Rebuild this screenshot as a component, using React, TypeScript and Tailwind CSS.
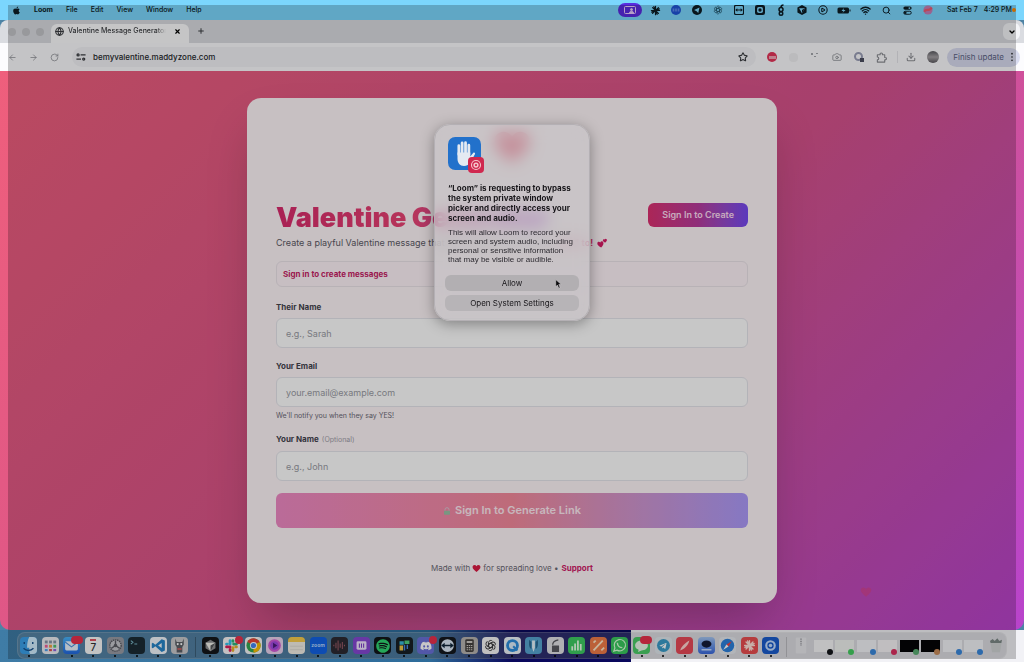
/**
 * File: App.tsx
 * Description: Desktop scene with a browser window, a Valentine form and a
 *              system permission dialog on top of everything.
 */

import type { ReactNode } from "react";
import {
  ArrowLeft,
  ArrowRight,
  Camera,
  ChevronDown,
  CirclePlay,
  Download,
  Globe,
  Plus,
  RotateCw,
  Search,
  Star,
  Wifi,
  X,
} from "lucide-react";
import { FaApple, FaDiscord, FaSpotify, FaTelegramPlane } from "react-icons/fa";

/* ---------- Small drawings ---------- */

function HeartIcon({ className }: { className?: string }) {
  return (
    <svg viewBox="0 0 24 24" className={className} fill="currentColor" aria-hidden="true">
      <path d="M12 21.5C5 16 1.5 12.4 1.5 8.2 1.5 5 4 2.8 6.9 2.8c2 0 4 1.1 5.1 3.1 1.1-2 3.1-3.1 5.1-3.1 2.9 0 5.4 2.2 5.4 5.4 0 4.2-3.5 7.8-10.5 13.3z" />
    </svg>
  );
}

function TwoHeartsIcon() {
  return (
    <svg viewBox="0 0 24 24" className="size-[10px]" fill="#d81c66" aria-hidden="true">
      <path d="M10 23C3.500 19.500 0 16 .8 12c.7-3.200 4.500-4.300 7-1.500C9.500 7.200 14 7.300 15.200 10.500 16.500 14.500 14 18.500 10 23z" />
      <path d="M20 11c-4-1.500-6.200-3.500-6-6 .2-2.300 2.800-3 4.500-1.200C19.500 1.500 22.500 1.300 23.500 3.500 24.400 6 22.500 8.500 20 11z" />
    </svg>
  );
}

function TuneIcon() {
  return (
    <svg viewBox="0 0 24 24" className="size-[10px]" fill="none" stroke="#3a3c40" strokeWidth="3">
      <circle cx="5" cy="7" r="2.500" />
      <path d="M11 7h12M1 17h11" />
      <circle cx="18.500" cy="17" r="2.500" />
    </svg>
  );
}

function ExtensionsIcon() {
  return (
    <svg viewBox="0 0 24 24" className="size-[11px]" fill="none" stroke="#8c8e94" strokeWidth="2.500">
      <path d="M3 6h6c-1-5 6-5 5 0h5v6c5-1 5 6 0 5v5H3v-5c4 0 4-6 0-6z" strokeLinejoin="round" />
    </svg>
  );
}

function Knot({ color }: { color: string }) {
  return (
    <svg viewBox="0 0 24 24" className="size-full" fill="none" stroke={color} strokeWidth="1.7">
      {[0, 60, 120, 180, 240, 300].map((a) => (
        <path key={a} transform={`rotate(${a} 12 12)`} d="M8.500 13.500V6.500a4 4 0 0 1 7.200-2.300M8.500 9.500l6-3.400" />
      ))}
    </svg>
  );
}

function Burst({ color }: { color: string }) {
  return (
    <svg viewBox="0 0 24 24" className="size-full" stroke={color} strokeWidth="2.600" strokeLinecap="round">
      <path d="M12 3v18M3 12h18M5.600 5.600l12.800 12.800M18.400 5.600L5.600 18.400M8.500 3.600l7 16.800M3.600 15.500l16.800-7" />
    </svg>
  );
}

function Shape({ children }: { children: ReactNode }) {
  return (
    <svg viewBox="0 0 24 24" className="size-full" aria-hidden="true">
      {children}
    </svg>
  );
}

/* ---------- Menu bar ---------- */

const STATUS_ICONS: { name: string; art: ReactNode }[] = [
  { name: "Burst", art: <div className="size-[11px]"><Burst color="#0c1c24" /></div> },
  {
    name: "Meetings",
    art: (
      <div className="size-[10px]">
        <Shape>
          <circle cx="12" cy="12" r="12" fill="#1f55d8" />
          <path d="M4 10h16M4 14h16" stroke="#8fb8ff" strokeWidth="2" strokeDasharray="4 2" />
        </Shape>
      </div>
    ),
  },
  {
    name: "Telegram",
    art: (
      <div className="size-[10px]">
        <Shape>
          <circle cx="12" cy="12" r="12" fill="#0c1c24" />
          <path d="M5 12l13-6-3 13-4-4z" fill="#7fd6fc" />
        </Shape>
      </div>
    ),
  },
  { name: "Assistant", art: <div className="size-[10px]"><Knot color="#24566c" /></div> },
  {
    name: "Remote",
    art: (
      <div className="size-[10px]">
        <Shape>
          <rect x="1" y="1" width="22" height="22" rx="4" fill="none" stroke="#0c1c24" strokeWidth="3" />
          <path d="M3 12l5-4v3h8V8l5 4-5 4v-3H8v3z" fill="#0c1c24" />
        </Shape>
      </div>
    ),
  },
  {
    name: "Recorder",
    art: (
      <div className="size-[10px]">
        <Shape>
          <rect width="24" height="24" rx="5" fill="#0c1c24" />
          <rect x="5" y="5" width="14" height="14" rx="4" fill="#7fd6fc" />
          <circle cx="12" cy="12" r="4" fill="#0c1c24" />
        </Shape>
      </div>
    ),
  },
  {
    name: "Sync",
    art: (
      <div className="size-[12px]">
        <Shape>
          <g fill="none" stroke="#0c1c24" strokeWidth="3">
            <circle cx="12" cy="11" r="4" />
            <circle cx="12" cy="19" r="3.500" />
            <path d="M12 7c0-4 2-5 5-5" />
          </g>
        </Shape>
      </div>
    ),
  },
  {
    name: "Cube",
    art: (
      <div className="size-[10px]">
        <Shape>
          <path d="M12 0l11 6v12l-11 6L1 18V6z" fill="#0c1c24" />
          <path d="M5 8h14l-7 12z" fill="#7fd6fc" />
          <path d="M12 12v8l7-12z" fill="#0c1c24" />
        </Shape>
      </div>
    ),
  },
  { name: "Play", art: <CirclePlay className="size-[10px]" strokeWidth={2.5} /> },
  {
    name: "Battery",
    art: (
      <svg viewBox="0 0 28 14" className="h-[7px] w-[14px]" aria-hidden="true">
        <rect x="1" y="1" width="23" height="12" rx="3" fill="#0c1c24" />
        <path d="M26 5v4" stroke="#0c1c24" strokeWidth="2" />
        <path d="M14 2l-5 6h4l-2 4 6-6h-4z" fill="#7fd6fc" />
      </svg>
    ),
  },
  { name: "Wi-Fi", art: <Wifi className="size-[11px]" strokeWidth={3} /> },
  { name: "Search", art: <Search className="size-[9px]" strokeWidth={2.5} /> },
  {
    name: "Control Center",
    art: (
      <div className="size-[9px]">
        <Shape>
          <rect x="1" y="1" width="22" height="9" rx="4.500" fill="#0c1c24" />
          <circle cx="17" cy="5.500" r="2.500" fill="#7fd6fc" />
          <rect x="2" y="14" width="20" height="8" rx="4" fill="none" stroke="#0c1c24" strokeWidth="2.500" />
          <circle cx="6" cy="18" r="3.500" fill="#0c1c24" />
        </Shape>
      </div>
    ),
  },
  {
    name: "Siri",
    art: (
      <div className="size-[10px]">
        <Shape>
          <circle cx="12" cy="12" r="11" fill="#c67fb8" />
          <path d="M3 16C8 6 15 18 21 6" fill="none" stroke="#f05a70" strokeWidth="5" />
        </Shape>
      </div>
    ),
  },
];

function MenuBar() {
  return (
    <header className="flex h-5 items-center justify-between bg-[#7bd6fd] pl-3 pr-2 text-[7px] font-medium text-[#0c1c24]">
      <nav className="flex items-center gap-[13px]">
        <FaApple className="size-[9px]" />
        <button className="font-bold">Loom</button>
        <button>File</button>
        <button>Edit</button>
        <button>View</button>
        <button>Window</button>
        <button>Help</button>
      </nav>
      <div className="flex items-center">
        <button
          aria-label="Screen sharing"
          className="mr-[3px] flex h-[14px] w-6 items-center justify-center rounded-full bg-[#5a2be0]"
        >
          <svg viewBox="0 0 24 16" className="h-2 w-3" fill="none" stroke="#e9ccff" strokeWidth="2">
            <rect x="1" y="1" width="22" height="14" rx="2" />
            <circle cx="15" cy="7" r="2" fill="#e9ccff" />
            <path d="M11 14c0-5 8-5 8 0z" fill="#e9ccff" />
          </svg>
        </button>
        {STATUS_ICONS.map((icon) => (
          <button key={icon.name} aria-label={icon.name} className="flex w-[21px] justify-center">
            {icon.art}
          </button>
        ))}
        <time className="ml-2 flex gap-[6px] whitespace-nowrap">
          <span>Sat Feb 7</span>
          <span>4:29 PM</span>
        </time>
        <span className="size-1 rounded-full bg-orange-400" />
      </div>
    </header>
  );
}

/* ---------- Browser chrome ---------- */

function TabStrip() {
  return (
    <div className="flex h-[23px] items-end bg-[#dadce1] pl-2 pr-1">
      <div className="flex h-[23px] w-[43px] items-center gap-[6px]">
        <span className="size-2 rounded-full bg-[#c3c4c8]" />
        <span className="size-2 rounded-full bg-[#c3c4c8]" />
        <span className="size-2 rounded-full bg-[#c3c4c8]" />
      </div>
      <div className="flex h-[19px] w-[138px] items-center gap-1 rounded-t-md bg-[#fdfdfe] px-1 pb-1">
        <Globe className="size-[9px] shrink-0 text-[#3a3c40]" strokeWidth={3} />
        <span className="flex-1 overflow-hidden whitespace-nowrap text-[7px] font-medium text-[#3a3c40] mask-r-from-90%">
          Valentine Message Generator
        </span>
        <button aria-label="Close tab" className="px-1">
          <X className="size-[7px]" strokeWidth={4} />
        </button>
      </div>
      <button aria-label="New tab" className="mb-2 ml-2">
        <Plus className="size-2 text-[#3a3c40]" strokeWidth={3} />
      </button>
      <button
        aria-label="Search tabs"
        className="mb-[3px] ml-auto flex size-[17px] items-center justify-center rounded-md bg-[#f4f5f8]"
      >
        <ChevronDown className="size-2" strokeWidth={4} />
      </button>
    </div>
  );
}

function Toolbar() {
  return (
    <div className="flex h-7 items-center bg-[#fcfcfe] pl-2 pr-1 text-[#8c8e94]">
      <button aria-label="Back" className="flex w-[21px] justify-start">
        <ArrowLeft className="size-[9px]" strokeWidth={2} />
      </button>
      <button aria-label="Forward" className="flex w-[21px] justify-start">
        <ArrowRight className="size-[9px]" strokeWidth={2} />
      </button>
      <button aria-label="Reload" className="flex w-[22px] justify-start">
        <RotateCw className="size-[9px]" strokeWidth={2} />
      </button>
      <div className="flex h-5 flex-1 items-center gap-[7px] rounded-full bg-[#f2f3f7] px-1">
        <TuneIcon />
        <input
          aria-label="Address"
          defaultValue="bemyvalentine.maddyzone.com"
          className="min-w-0 flex-1 bg-transparent text-[8px] font-medium text-[#26282c] outline-none"
        />
        <button aria-label="Bookmark" className="mr-1">
          <Star className="size-[10px] text-[#3a3c40]" strokeWidth={2.5} />
        </button>
      </div>
      <div className="ml-[11px] flex items-center gap-3">
        <button
          aria-label="Ad blocker"
          className="flex size-[10px] items-center justify-center rounded-full bg-[#e4355a]"
        >
          <span className="h-[3px] w-[7px] bg-[#f4a5b5]" />
        </button>
        <span className="size-[9px] rounded-sm bg-[#f0f0f3]" />
        <svg viewBox="0 0 10 10" className="size-[10px]" fill="#a5a7ac">
          <path d="M1 1h2v2H1zM6 1h2v1H6zM4 4h2v1H4z" />
        </svg>
        <Camera className="size-[10px]" strokeWidth={2} />
        <span className="relative size-[10px]">
          <span className="block size-[9px] rounded-full border-2 border-[#9b9fb8]" />
          <span className="absolute bottom-0 right-0 size-1 bg-[#4c4f60]" />
        </span>
        <ExtensionsIcon />
      </div>
      <span className="ml-[10px] mr-2 h-3 w-px bg-[#e4e5ea]" />
      <button aria-label="Downloads" className="mr-[11px]">
        <Download className="size-[10px]" strokeWidth={2.5} />
      </button>
      <button
        aria-label="Profile"
        className="mr-2 size-3 rounded-full bg-linear-to-b from-[#5a5a60] via-[#a5a2a5] to-[#5c5a60]"
      />
      <button className="flex h-[19px] items-center rounded-full bg-[#d9dcf0] px-[6px] text-[8px] text-[#5c6384]">
        Finish update
        <svg viewBox="0 0 4 12" className="ml-[6px] h-[10px] w-1" fill="#26282c">
          <circle cx="2" cy="2" r="1" />
          <circle cx="2" cy="6" r="1" />
          <circle cx="2" cy="10" r="1" />
        </svg>
      </button>
    </div>
  );
}

/* ---------- Valentine form ---------- */

interface FieldProps {
  id: string;
  label: string;
  placeholder: string;
  optional?: boolean;
  hint?: string;
  type?: string;
}

function Field({ id, label, placeholder, optional, hint, type = "text" }: FieldProps) {
  return (
    <div>
      <label htmlFor={id} className="block text-[8px] leading-3 font-bold text-[#44444e]">
        {label}
        {optional && <span className="ml-[3px] text-[7px] font-normal text-[#a3a0aa]">(Optional)</span>}
      </label>
      <input
        id={id}
        type={type}
        placeholder={placeholder}
        className="mt-[5px] h-[30px] w-full rounded-md border border-[#e6e6ec] bg-white px-[9px] text-[9px] outline-none placeholder:text-[#9a9ca4]"
      />
      {hint && <p className="mt-1 text-[7px] leading-[10px] text-[#6c6a76]">{hint}</p>}
    </div>
  );
}

function ValentineCard() {
  return (
    <section className="w-full max-w-[530px] rounded-[14px] bg-[#fff6f9] px-[29px] pb-[27px] pt-[29px] shadow-2xl">
      <HeartIcon className="mx-auto size-10 text-[#f2516e]" />
      <div className="mt-9 flex items-start justify-between">
        <h1 className="bg-linear-to-r from-[#d92a6c] via-[#ea4474] to-[#a53ae0] bg-clip-text text-[27px] leading-[30px] font-black text-transparent">
          Valentine Generator
        </h1>
        <button className="h-6 rounded-md bg-linear-to-r from-[#dc3070] via-[#b83a9c] to-[#7549f2] px-[14px] text-[9px] font-semibold text-[#ffdcf2]">
          Sign In to Create
        </button>
      </div>
      <p className="flex items-center whitespace-nowrap text-[9px] leading-5 text-[#5c5a66]">
        Create a playful Valentine message that they simply could not say&nbsp;
        <span className="font-semibold text-[#e0246a]">&quot;No&quot; to!</span>
        <span className="ml-1">
          <TwoHeartsIcon />
        </span>
      </p>
      <div className="mt-2 flex h-[26px] items-center rounded-md border border-[#ece4ea] bg-[#fff4f9] px-[6px]">
        <a href="#signin" className="text-[8px] font-bold text-[#c61e66]">
          Sign in to create messages
        </a>
      </div>

      <form className="mt-[14px]" onSubmit={(e) => e.preventDefault()}>
        <div className="flex flex-col gap-3">
          <Field id="their-name" label="Their Name" placeholder="e.g., Sarah" />
          <Field
            id="email"
            type="email"
            label="Your Email"
            placeholder="your.email@example.com"
            hint="We'll notify you when they say YES!"
          />
          <Field id="your-name" label="Your Name" placeholder="e.g., John" optional />
          <button className="flex h-[35px] w-full items-center justify-center gap-1 rounded-md bg-linear-to-r from-[#ef8ac4] via-[#f48a9c] to-[#ac9afa] text-[11px] font-semibold text-[#ffeaf2]">
            <svg viewBox="0 0 24 24" className="size-2" aria-hidden="true">
              <path d="M6 11V8a6 6 0 0 1 12 0v3" fill="none" stroke="#d8c4d0" strokeWidth="3" />
              <rect x="3" y="11" width="18" height="12" rx="2" fill="#9cc0a6" />
            </svg>
            Sign In to Generate Link
          </button>
        </div>
      </form>

      <footer className="mt-8 flex items-center justify-center gap-[2px] text-[8px] leading-4 text-[#6c6a76]">
        Made with
        <HeartIcon className="size-[9px] text-[#dc1c44]" />
        for spreading love •
        <a href="#support" className="ml-px font-bold text-[#cf1c68]">
          Support
        </a>
      </footer>
    </section>
  );
}

/* ---------- Dock ---------- */

interface DockApp {
  name: string;
  tile: string;
  art: ReactNode;
  badge?: string;
  idle?: boolean;
}

const SYSTEM_APPS: DockApp[] = [
  {
    name: "Finder",
    tile: "bg-[#3aa0ea]",
    art: (
      <Shape>
        <path d="M13 0h11v24H14c-1-3-1-6-1-9h-3c0-6 1-11 3-15z" fill="#d2efff" />
        <path d="M6 7v3M18 7v3M5 16c4 4 10 4 14 0" fill="none" stroke="#15518c" strokeWidth="2" />
      </Shape>
    ),
  },
  {
    name: "Launchpad",
    tile: "bg-[#eceef2]",
    idle: true,
    art: (
      <Shape>
        <rect x="4" y="5" width="4" height="4" fill="#8896a8" />
        <rect x="10" y="5" width="4" height="4" fill="#8896a8" />
        <rect x="16" y="5" width="4" height="4" fill="#8896a8" />
        <rect x="4" y="11" width="4" height="4" fill="#f0609a" />
        <rect x="10" y="11" width="4" height="4" fill="#f0a040" />
        <rect x="16" y="11" width="4" height="4" fill="#50c070" />
        <rect x="4" y="17" width="4" height="3" fill="#50a0f0" />
        <rect x="10" y="17" width="4" height="3" fill="#e05050" />
        <rect x="16" y="17" width="4" height="3" fill="#9060e0" />
      </Shape>
    ),
  },
  {
    name: "Mail",
    tile: "bg-linear-to-b from-[#4ab4fa] to-[#2468e0]",
    badge: "w-3",
    art: (
      <Shape>
        <rect x="3" y="6" width="18" height="13" rx="2" fill="#e8f4ff" />
        <path d="M3 7l9 7 9-7" fill="none" stroke="#4a90e0" strokeWidth="1.500" />
      </Shape>
    ),
  },
  {
    name: "Calendar",
    tile: "bg-[#fafafa]",
    art: (
      <div className="flex flex-col items-center leading-none">
        <span className="h-[2px] w-[6px] bg-[#e25260]" />
        <span className="mt-px text-[10px] font-medium text-[#333333]">7</span>
      </div>
    ),
  },
  {
    name: "System Settings",
    tile: "bg-[#9a9ca4]",
    art: (
      <Shape>
        <circle cx="12" cy="12" r="8" fill="#c6c8ce" stroke="#5c5e66" strokeWidth="2" strokeDasharray="2 1" />
        <path d="M12 12V5M12 12l6 4M12 12l-6 4" stroke="#5c5e66" strokeWidth="2" />
        <circle cx="12" cy="12" r="2.500" fill="#5c5e66" />
      </Shape>
    ),
  },
  {
    name: "Terminal",
    tile: "bg-[#1c2b34]",
    art: (
      <Shape>
        <path d="M4 5l3 2.500L4 10M9 10h4" fill="none" stroke="#7ab8c8" strokeWidth="1.500" />
      </Shape>
    ),
  },
  {
    name: "Code",
    tile: "bg-[#f2f7fb]",
    art: (
      <Shape>
        <path d="M16.500 3L21 5v14l-4.500 2-9-8-3.500 3-1.500-1V9L4 8l3.500 3zM16.500 8.500L11.500 12l5 3.500z" fill="#2684c8" fillRule="evenodd" />
      </Shape>
    ),
  },
  {
    name: "Robot",
    tile: "bg-[#c9c9cc]",
    art: (
      <Shape>
        <path d="M6 2l2 5h8l2-5v9l-2 3v8H8v-8l-2-3z" fill="#5b5f66" />
        <circle cx="9.500" cy="10" r="1.500" fill="#ffffff" />
        <circle cx="14.500" cy="10" r="1.500" fill="#ffffff" />
        <path d="M9 17h6" stroke="#e06060" strokeWidth="2" />
      </Shape>
    ),
  },
];

const USER_APPS: DockApp[] = [
  {
    name: "Cursor",
    tile: "bg-[#14161a]",
    art: (
      <Shape>
        <path d="M12 4l7 4v8l-7 4-7-4V8z" fill="#8c8e90" />
        <path d="M5 8h14l-7 12z" fill="#f0f0ea" />
        <path d="M12 12v8l7-12z" fill="#55575a" />
      </Shape>
    ),
  },
  {
    name: "Slack",
    tile: "bg-[#fbf6f8]",
    badge: "w-2",
    art: (
      <Shape>
        <g strokeWidth="4" strokeLinecap="round">
          <path d="M10 5v5M5 10h1" stroke="#36c5f0" />
          <path d="M19 10h-4M14 5v1" stroke="#2eb67d" />
          <path d="M14 19v-4M19 14h-1" stroke="#ecb22e" />
          <path d="M5 14h5M10 19v-1" stroke="#e01e5a" />
        </g>
      </Shape>
    ),
  },
  {
    name: "Chrome",
    tile: "bg-[#f6f6f6]",
    art: (
      <Shape>
        <circle cx="12" cy="12" r="10" fill="#34a853" />
        <path d="M12 12L3.300 7a10 10 0 0 1 17.400 0z" fill="#ea4335" />
        <path d="M12 12l8.700-5A10 10 0 0 1 12 22z" fill="#fbbc05" />
        <circle cx="12" cy="12" r="5" fill="#ffffff" />
        <circle cx="12" cy="12" r="3.700" fill="#4285f4" />
      </Shape>
    ),
  },
  {
    name: "Media",
    tile: "bg-[#e9d2ee]",
    art: (
      <Shape>
        <circle cx="12" cy="12" r="9" fill="#d25ad6" />
        <circle cx="12" cy="12" r="6" fill="#a04ae0" />
        <path d="M10 8l6 4-6 4z" fill="#4a1c78" />
      </Shape>
    ),
  },
  {
    name: "Notes",
    tile: "bg-linear-to-b from-[#f8cc4c] from-30% to-[#f4f0e6] to-30%",
    art: <Shape><path d="M3 13h18M3 18h18" stroke="#d8d4cc" /></Shape>,
  },
  {
    name: "Zoom",
    tile: "bg-[#1262e4]",
    art: <span className="text-[5px] font-bold text-[#b8d8ff]">zoom</span>,
  },
  {
    name: "Audio",
    tile: "bg-[#2c2a32]",
    art: (
      <Shape>
        <path d="M4 11v2M7 8v8M10 5v14M13 9v6M16 7v10M19 11v2" stroke="#9a5a66" strokeWidth="1.500" />
      </Shape>
    ),
  },
  {
    name: "Projects",
    tile: "bg-[#8648d4]",
    art: (
      <Shape>
        <rect x="5" y="6" width="14" height="12" rx="2" fill="#f0e4ff" />
        <path d="M9 9v6M12 9v6M15 9v6" stroke="#7a3ac8" strokeWidth="1.500" />
      </Shape>
    ),
  },
  { name: "Spotify", tile: "bg-[#12161a]", art: <FaSpotify className="size-[14px] text-[#30d872]" /> },
  {
    name: "Editor",
    tile: "bg-[#181f24]",
    art: (
      <Shape>
        <path d="M5 6h6v5H5z" fill="#38b8d8" />
        <path d="M12 5h7v5h-7z" fill="#50d080" />
        <path d="M5 12h5v7H5z" fill="#f0c84a" />
        <path d="M12 11v8M16 11v6" stroke="#4a8ae0" strokeWidth="2" />
      </Shape>
    ),
  },
  { name: "Discord", tile: "bg-[#6a70d8]", badge: "w-2", art: <FaDiscord className="size-3 text-white" /> },
  {
    name: "Remote",
    tile: "bg-[#14181e]",
    art: (
      <Shape>
        <circle cx="12" cy="12" r="9" fill="#dce8f6" />
        <path d="M3 12l5-4v3h8V8l5 4-5 4v-3H8v3z" fill="#10263a" />
      </Shape>
    ),
  },
  {
    name: "Calculator",
    tile: "bg-[#b8b4b0]",
    art: (
      <Shape>
        <rect x="6" y="3" width="12" height="18" rx="2" fill="#44403e" />
        <path d="M8 7h8" stroke="#cfcac4" strokeWidth="3" />
        <path d="M8 12h8M8 15h8M8 18h8" stroke="#cfcac4" strokeWidth="1.500" strokeDasharray="2 1" />
      </Shape>
    ),
  },
  { name: "ChatGPT", tile: "bg-[#f6f6f6]", art: <div className="size-[13px]"><Knot color="#3a3a3c" /></div> },
  {
    name: "QuickTime",
    tile: "bg-[#eef4fa]",
    art: (
      <Shape>
        <circle cx="12" cy="12" r="7" fill="#dceefc" stroke="#2c8cdc" strokeWidth="4" />
        <path d="M13 13l6 6" stroke="#2c8cdc" strokeWidth="3" />
      </Shape>
    ),
  },
  {
    name: "Database",
    tile: "bg-[#56a4d0]",
    art: (
      <Shape>
        <path d="M6 4c-1 7 0 12 3 13V7M18 4c1 7 0 12-3 13V7" fill="#2a6a94" />
        <path d="M10 5h4v10l-2 6-2-6z" fill="#e6f4fc" />
      </Shape>
    ),
  },
  {
    name: "Archive",
    tile: "bg-[#e2e2e6]",
    art: (
      <Shape>
        <path d="M7 12h10v9H7z" fill="#5a5a60" />
        <path d="M8 11c0-4 3-6 8-7" fill="none" stroke="#5a5a60" strokeWidth="2" />
      </Shape>
    ),
  },
  {
    name: "Numbers",
    tile: "bg-[#3ecb62]",
    art: <Shape><path d="M6 19v-6M10 19V9M14 19V5M18 19v-9" stroke="#e8ffe8" strokeWidth="2.500" /></Shape>,
  },
  {
    name: "Pages",
    tile: "bg-[#f07c48]",
    art: <Shape><path d="M5 19L18 5M5 8l3-3M16 19l4-4" stroke="#ffe8c8" strokeWidth="2.500" /></Shape>,
  },
  {
    name: "WhatsApp",
    tile: "bg-[#3ac85e]",
    art: (
      <Shape>
        <path d="M4 20l1.500-4.500A8 8 0 1 1 8.500 18.500z" fill="none" stroke="#d8ffd8" strokeWidth="1.700" />
        <path d="M9 8c0 4 3 7 7 7" fill="none" stroke="#d8ffd8" strokeWidth="2" />
      </Shape>
    ),
  },
  {
    name: "Messages",
    tile: "bg-[#4ccc68]",
    badge: "w-3",
    art: <Shape><path d="M12 5c5 0 9 3 9 7s-4 7-9 7l-5 2 1-3c-3-1-5-3-5-6 0-4 4-7 9-7z" fill="#e8f8e8" /></Shape>,
  },
  {
    name: "Telegram",
    tile: "bg-[#e0e8ee]",
    art: (
      <div className="flex size-[13px] items-center justify-center rounded-full bg-[#3a9cc8]">
        <FaTelegramPlane className="size-2 text-white" />
      </div>
    ),
  },
  {
    name: "Sketchpad",
    tile: "bg-[#e84a58]",
    art: <Shape><path d="M6 19c1-5 6-10 13-14-2 7-7 12-13 14z" fill="#ffd6d0" /></Shape>,
  },
  {
    name: "Capture",
    tile: "bg-linear-to-b from-[#a4c4f0] to-[#3a68dc]",
    art: (
      <Shape>
        <ellipse cx="12" cy="10" rx="7" ry="5" fill="#141c38" />
        <path d="M5 18h14" stroke="#c4dcff" strokeWidth="2" />
      </Shape>
    ),
  },
  {
    name: "Safari",
    tile: "bg-[#e4e8ee]",
    art: (
      <Shape>
        <circle cx="12" cy="12" r="9.500" fill="#2c80dc" />
        <path d="M18 6l-4.500 7.500-3-3z" fill="#f04040" />
        <path d="M6 18l4.500-7.500 3 3z" fill="#ffffff" />
      </Shape>
    ),
  },
  { name: "Loom", tile: "bg-[#e84e50]", art: <div className="size-[13px]"><Burst color="#ffe0d8" /></div> },
  {
    name: "Recorder",
    tile: "bg-[#1a5ccc]",
    art: (
      <Shape>
        <circle cx="12" cy="12" r="6" fill="none" stroke="#c2dcff" strokeWidth="3" />
        <circle cx="12" cy="12" r="2.500" fill="#c2dcff" />
      </Shape>
    ),
  },
];

const MINIMIZED = [
  { name: "Document", page: "bg-[#f6f6f8]", app: "bg-[#14161a]" },
  { name: "Sheet", page: "bg-[#f0f2f0]", app: "bg-[#44cc60]" },
  { name: "Page one", page: "bg-[#f2f4f8]", app: "bg-[#3a88dc]" },
  { name: "Page two", page: "bg-[#f6f4f6]", app: "bg-[#dc3060]" },
  { name: "Console one", page: "bg-[#050507]", app: "bg-[#5cae74]" },
  { name: "Console two", page: "bg-[#050507]", app: "bg-[#c88c5c]" },
  { name: "Page three", page: "bg-[#f2f4f8]", app: "bg-[#3a88dc]" },
  { name: "Page four", page: "bg-[#f2f4f8]", app: "bg-[#3a88dc]" },
];

function DockItem({ app }: { app: DockApp }) {
  return (
    <button aria-label={app.name} className="relative flex min-w-0 flex-1 flex-col items-center gap-px">
      <span className={`flex size-[17px] items-center justify-center overflow-hidden rounded-[4px] ${app.tile}`}>
        {app.art}
      </span>
      {app.badge && <span className={`absolute -top-px right-0 h-2 rounded-full bg-[#e8304c] ${app.badge}`} />}
      <span className={`size-[2px] rounded-full ${app.idle ? "bg-transparent" : "bg-black"}`} />
    </button>
  );
}

function Dock() {
  return (
    <footer className="bg-[linear-gradient(90deg,#3f7ca6_0%,#2e6c9a_42%,#09085c_50%,#09085c_61.6%,#f2f2f6_61.6%)] px-[17px] pb-1 pt-[2px]">
      <div className="flex h-[27px] items-start rounded-lg border border-white/15 bg-[#a0a0a6]/25 pt-1">
        {SYSTEM_APPS.map((app) => (
          <DockItem key={app.name} app={app} />
        ))}
        <span className="mx-1 h-5 w-px bg-black/25" />
        {USER_APPS.map((app) => (
          <DockItem key={app.name} app={app} />
        ))}
        <span className="mx-1 h-5 w-px bg-black/15" />
        <button aria-label="Downloads folder" className="flex flex-1 justify-center">
          <svg viewBox="0 0 24 36" className="h-[17px] w-3">
            <rect x="1" y="1" width="22" height="34" rx="2" fill="#e8e8ec" />
            <path d="M12 3v16" stroke="#96969c" strokeWidth="3" strokeDasharray="3 2" />
          </svg>
        </button>
        {MINIMIZED.map((win) => (
          <button key={win.name} aria-label={win.name} className="flex flex-1 justify-center pt-[3px]">
            <span className={`relative h-3 w-[19px] ${win.page}`}>
              <span className={`absolute -bottom-[3px] right-0 size-[6px] rounded-sm ${win.app}`} />
            </span>
          </button>
        ))}
        <button aria-label="Trash" className="flex flex-1 justify-center">
          <svg viewBox="0 0 24 24" className="size-4">
            <path d="M3 5h18l-3 18H6z" fill="#d0d4d4" />
            <path d="M3 6l4-3 3 3 4-4 3 4 4-2-1 5H4z" fill="#7c8886" />
          </svg>
        </button>
      </div>
    </footer>
  );
}

/* ---------- Permission dialog ---------- */

function PermissionDialog() {
  return (
    <div
      role="dialog"
      aria-labelledby="permission-title"
      className="absolute left-1/2 top-[124px] w-[156px] -translate-x-1/2 rounded-2xl border border-[#b4b0b4] bg-[#c9c6c9]/60 px-[10px] pb-[9px] pt-3 shadow-[0_3px_14px_rgba(0,0,0,0.35)] backdrop-blur-[8px]"
    >
      <div className="relative ml-[3px] size-9">
        <svg viewBox="0 0 32 32" className="size-[33px]" aria-hidden="true">
          <rect width="32" height="32" rx="7" fill="#2271cb" />
          <g stroke="#e4eaf2" strokeWidth="2.700" strokeLinecap="round">
            <path d="M10.500 17V8.500M13.700 16V5.800M17 16V5.500M20.200 17V8" />
          </g>
          <path d="M9.200 15h12.400v4l2.800-3.600c1-1 2.400 0 1.700 1.300L22 24c-1.500 3-4 4-6.500 4-4 0-6.300-3-6.300-7z" fill="#e4eaf2" />
        </svg>
        <span className="absolute bottom-0 right-0 flex size-4 items-center justify-center rounded-[4px] bg-[#d0284f]">
          <svg viewBox="0 0 16 16" className="size-3" fill="none" stroke="#f6c4cc">
            <circle cx="8" cy="8" r="6" strokeWidth="1.500" />
            <circle cx="8" cy="8" r="2.500" strokeWidth="2" />
          </svg>
        </span>
      </div>
      <h2 id="permission-title" className="ml-[3px] mt-[10px] whitespace-nowrap text-[8px] leading-[10px] font-bold text-[#18161a]">
        “Loom” is requesting to bypass
        <br />
        the system private window
        <br />
        picker and directly access your
        <br />
        screen and audio.
      </h2>
      <p className="ml-[3px] mt-[5px] whitespace-nowrap font-['Liberation_Sans',sans-serif] text-[8px] leading-[9px] text-[#2c2a30]">
        This will allow Loom to record your
        <br />
        screen and system audio, including
        <br />
        personal or sensitive information
        <br />
        that may be visible or audible.
      </p>
      <div className="mt-[11px] flex flex-col gap-1 text-[8px] text-[#18161a]">
        <button className="h-4 rounded-md bg-[#b2afb2]">Allow</button>
        <button className="h-4 rounded-md bg-[#b7b4b7]">Open System Settings</button>
      </div>
      <svg viewBox="0 0 12 18" className="absolute right-[27px] top-[154px] h-[10px] w-[7px]" aria-hidden="true">
        <path d="M1 1v13l3-3 2.500 5.500 2.500-1L6.500 10H11z" fill="#0c0c0e" stroke="#d8d4d8" />
      </svg>
    </div>
  );
}

export default function App() {
  return (
    <div className="relative flex min-h-screen flex-col overflow-hidden bg-[#4d83a5] font-[Inter,'Liberation_Sans',sans-serif]">
      <MenuBar />
      <div className="flex flex-1 flex-col overflow-hidden rounded-t-lg rounded-b-[10px]">
        <TabStrip />
        <Toolbar />
        <main className="relative flex flex-1 justify-center bg-linear-135 from-[#ef5f7c] via-[#d6528c] via-55% to-[#b843cc] px-4 py-[27px]">
          <ValentineCard />
          <HeartIcon className="absolute bottom-8 right-[152px] size-3 text-[#e8406c]/40" />
        </main>
      </div>
      <Dock />

      {/* Shade that dims the desktop while the dialog is open */}
      <div className="pointer-events-none absolute inset-x-2 bottom-1 top-[5px] bg-black/22" />
      <PermissionDialog />
    </div>
  );
}
